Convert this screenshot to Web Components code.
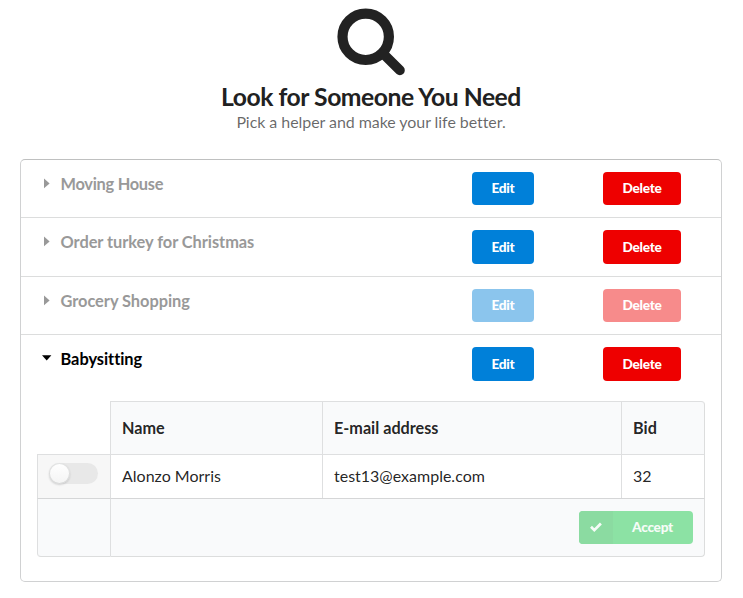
<!DOCTYPE html>
<html lang="en">
<head>
<meta charset="utf-8">
<title>Look for Someone You Need</title>
<style>
html, body { margin: 0; background: #fff; }
body { width: 743px; height: 598px; overflow: hidden; font-family: Lato, "Open Sans", sans-serif; font-variant-ligatures: none; color: rgba(0,0,0,.87); }
</style>
</head>
<body>
<helper-page></helper-page>
<script>
function define(name, markup) {
  const template = document.createElement('template');
  template.innerHTML = '<style>*{box-sizing:border-box}</style>' + markup;
  customElements.define(name, class extends HTMLElement {
    constructor() {
      super();
      this.attachShadow({ mode: 'open' }).append(template.content.cloneNode(true));
    }
  });
}

define('page-header', `
<style>
:host { display: flex; flex-direction: column; align-items: center; height: 159px; padding-top: 5px; box-sizing: border-box; }
svg { display: block; width: 80px; height: 75px; }
h2 { margin: 1px 0 0; font-size: 24.7px; line-height: 32px; font-weight: 700; letter-spacing: -.46px; color: #212121; white-space: nowrap; }
p { margin: -1px 0 0; font-size: 16px; line-height: 20px; letter-spacing: -.06px; color: rgba(0,0,0,.6); white-space: nowrap; }
h2, p { padding-right: 1px; }
</style>
<svg viewBox="0 0 80 75" fill="none" stroke="#222" stroke-linecap="round">
  <circle cx="33.7" cy="31.8" r="23.2" stroke-width="10.2"/>
  <path d="M51.5 49L67.9 65.3" stroke-width="9.8"/>
</svg>
<h2><slot></slot></h2>
<p><slot name="subtitle"></slot></p>`);

define('action-button', `
<style>
:host { display: flex; align-items: center; justify-content: center; height: 33px; padding-bottom: 1px; border-radius: 4px; box-sizing: border-box; color: #fff; font-size: 13.7px; line-height: 14px; font-weight: 900; letter-spacing: -.3px; white-space: nowrap; overflow: hidden; }
:host([kind="edit"]) { width: 62px; background: #0080d9; }
:host([kind="delete"]) { width: 78px; background: #ee0000; }
:host([tall]) { height: 34px; }
:host([disabled]) { opacity: .45; }
</style>
<slot></slot>`);

define('task-row', `
<style>
:host { display: grid; grid-template-columns: 39.5px 411.5px 131px 1fr; align-items: start; height: 58px; padding-top: 12px; border-bottom: 1px solid #dcdddd; box-sizing: border-box; color: #999; }
:host([tall]) { height: 59px; }
:host([active]) { border-bottom: 0; color: #000; }
svg { display: block; width: 12px; height: 12px; margin: 5px 0 0 20px; fill: currentColor; }
.down { display: none; }
:host([active]) .down { display: block; }
:host([active]) .right { display: none; }
.title { font-size: 16.4px; line-height: 24px; font-weight: 700; letter-spacing: var(--title-tracking, -.05px); white-space: nowrap; }
</style>
<div><svg class="right" viewBox="0 0 12 12"><path d="M3 1.6L8.6 6.4L3 11.2Z"/></svg><svg class="down" viewBox="0 0 12 12"><path d="M1 3.3H10.4L5.7 8.4Z"/></svg></div>
<div class="title"><slot></slot></div>
<slot name="edit"></slot>
<slot name="delete"></slot>`);

define('toggle-switch', `
<style>
:host { display: flex; align-items: center; width: 49px; height: 21px; border-radius: 11px; background: #e8e8e8; }
i { width: 21px; height: 21px; border-radius: 50%; background: linear-gradient(#fff, #f4f4f4); box-shadow: 0 1px 2px rgba(34,36,38,.18), 0 0 0 1px rgba(34,36,38,.13) inset; }
</style><i></i>`);

define('accept-button', `
<style>
:host { display: flex; width: 114px; height: 33px; border-radius: 4px; overflow: hidden; background: #8ce2a4; color: #fff; font-size: 13.7px; line-height: 32px; font-weight: 900; letter-spacing: -.3px; }
.icon { display: flex; align-items: center; justify-content: center; width: 34px; background: #8bdba1; }
svg { width: 14px; height: 14px; }
.label { flex: 1; text-align: center; padding-right: 1px; opacity: .92; }
</style>
<span class="icon"><svg viewBox="0 0 14 14" fill="none" stroke="#fff" stroke-opacity=".92" stroke-width="2.7"><path d="M2 6.8L5.3 10.1L11.9 3.5"/></svg></span>
<span class="label"><slot></slot></span>`);

define('bid-table', `
<style>
:host { display: block; width: 668px; }
.grid { display: grid; grid-template-columns: 73px 212px 299px 84px; grid-template-rows: 53px 44px 59px; font-size: 16px; }
.grid > div { display: flex; align-items: center; border-left: 1px solid #dedfe0; border-top: 1px solid #dedfe0; padding: 0 0 2px 11px; white-space: nowrap; }
.grid > .blank { border: 0; }
.grid > .head { background: #f9fafb; font-weight: 700; font-size: 16.2px; }
.grid > .end { border-right: 1px solid #dcdddd; }
.grid > .tr { border-top-right-radius: 4px; }
.grid > .toggle { background: #f7f7f7; align-items: flex-start; padding: 8px 0 0 11px; }
.grid > .foot { background: #f9fafb; border-bottom: 1px solid #dcdddd; border-top-color: #d5d6d7; }
.grid > .bl { border-bottom-left-radius: 4px; }
.grid > .wide { grid-column: 2 / 5; justify-content: flex-end; padding: 0 11px 1px 0; border-bottom-right-radius: 4px; }
</style>
<div class="grid">
  <div class="blank"></div><div class="head">Name</div><div class="head">E-mail address</div><div class="head end tr">Bid</div>
  <div class="toggle"><toggle-switch></toggle-switch></div><div>Alonzo Morris</div><div>test13@example.com</div><div class="end">32</div>
  <div class="foot bl"></div><div class="foot wide end"><accept-button>Accept</accept-button></div>
</div>`);

define('task-panel', `
<style>
:host { display: block; width: 702px; height: 423px; margin: 0 0 0 20px; border: 1px solid #d0d1d2; border-top-color: #bfc0c0; border-radius: 5px; box-sizing: border-box; }
::slotted(bid-table) { margin: 8px 0 0 16px; }
</style><slot></slot>`);

define('helper-page', `
<style>:host { display: block; width: 743px; } .snug { --title-tracking: -.28px; }</style>
<page-header>Look for Someone You Need<span slot="subtitle">Pick a helper and make your life better.</span></page-header>
<task-panel>
  <task-row class="snug">Moving House<action-button slot="edit" kind="edit">Edit</action-button><action-button slot="delete" kind="delete">Delete</action-button></task-row>
  <task-row tall>Order turkey for Christmas<action-button slot="edit" kind="edit" tall>Edit</action-button><action-button slot="delete" kind="delete" tall>Delete</action-button></task-row>
  <task-row>Grocery Shopping<action-button slot="edit" kind="edit" disabled>Edit</action-button><action-button slot="delete" kind="delete" disabled>Delete</action-button></task-row>
  <task-row active>Babysitting<action-button slot="edit" kind="edit" tall>Edit</action-button><action-button slot="delete" kind="delete" tall>Delete</action-button></task-row>
  <bid-table></bid-table>
</task-panel>`);
</script>
</body>
</html>
